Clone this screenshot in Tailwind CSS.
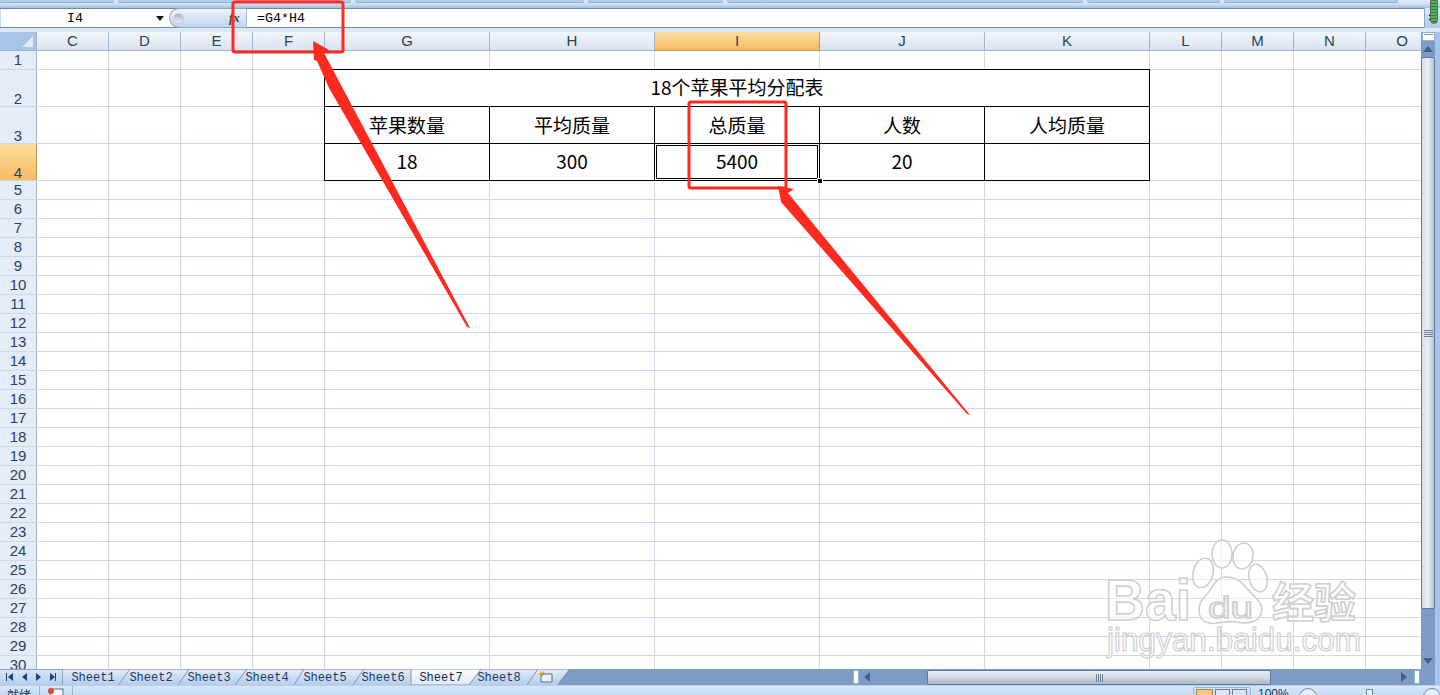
<!DOCTYPE html>
<html lang="zh">
<head>
<meta charset="utf-8">
<title>Excel</title>
<script src="https://cdn.jsdelivr.net/npm/@tailwindcss/browser@4"></script>
</head>
<body class="overflow-hidden">
<div class="relative w-[1440px] h-[695px] overflow-hidden flex flex-col bg-white font-['Liberation_Sans',sans-serif]">

  <!-- ribbon remnant -->
  <div class="h-[8px] shrink-0 bg-gradient-to-b from-[#dcecfb] via-[#cfe2f6] to-[#a6bedc] flex items-start gap-[4px]">
    <div class="w-[114px] h-[3px] rounded-b-[2px] bg-[#aecde9] border-b border-[#8fb2d6]"></div>
    <div class="w-[233px] h-[3px] rounded-b-[2px] bg-[#aecde9] border-b border-[#8fb2d6]"></div>
    <div class="w-[229px] h-[3px] rounded-b-[2px] bg-[#aecde9] border-b border-[#8fb2d6]"></div>
    <div class="w-[135px] h-[3px] rounded-b-[2px] bg-[#aecde9] border-b border-[#8fb2d6]"></div>
    <div class="w-[356px] h-[3px] rounded-b-[2px] bg-[#aecde9] border-b border-[#8fb2d6]"></div>
    <div class="w-[133px] h-[3px] rounded-b-[2px] bg-[#aecde9] border-b border-[#8fb2d6]"></div>
    <div class="w-[174px] h-[3px] rounded-b-[2px] bg-[#aecde9] border-b border-[#8fb2d6]"></div>
  </div>

  <!-- formula bar -->
  <div class="relative h-[20px] shrink-0 flex items-stretch bg-white border-y border-[#6f88a8]">
    <div class="w-[1px] bg-[#c9dcf2]"></div>
    <div class="w-[168px] relative flex items-center pt-px font-['Liberation_Mono',monospace] text-[13.33px] text-black">
      <span class="ml-[66px]">I4</span>
      <svg class="ml-[73px]" width="8" height="5" viewBox="0 0 8 5"><path d="M0 0h8L4 5z" fill="#111"/></svg>
    </div>
    <div class="w-[77px] -my-px rounded-l-full bg-gradient-to-b from-[#f1f6fc] via-[#d5e3f3] to-[#c2d5ec] border border-[#8aa5c6] border-r-0 flex items-center">
      <div class="ml-[3px] w-[11px] h-[11px] rounded-full bg-gradient-to-b from-[#aab4c0] to-[#eef2f6] border border-[#c8d2de]"></div>
      <span class="ml-[45px] font-['Liberation_Serif',serif] italic text-[13px] font-bold text-[#444]">fx</span>
    </div>
    <div class="w-[1px] bg-[#a9bdd6]"></div>
    <div class="flex-1 flex items-center pl-[10px] pt-px font-['Liberation_Mono',monospace] text-[13.33px] text-black">=G4*H4</div>
    <div class="w-[16px] -my-px bg-gradient-to-b from-[#dce8f6] to-[#b5cbe5] border-l border-[#8aa5c6] flex items-center justify-center">
      <svg width="9" height="10" viewBox="0 0 9 10"><path d="M1 2l3 2 3-2M1 6l3 2 3-2" fill="none" stroke="#111" stroke-width="1.2"/></svg>
    </div>
  </div>
  <div class="h-[4px] shrink-0 bg-[#dbe8f6]"></div>

  <!-- sheet + vertical scrollbar -->
  <div class="h-[637px] shrink-0 flex">
    <div class="relative flex-1 overflow-hidden">
      <!-- vertical gridlines -->
      <div class="absolute inset-0 flex">
        <div class="w-[37px] shrink-0"></div>
        <div class="w-[72px] shrink-0 border-r border-[#d0d7e5]"></div>
        <div class="w-[72px] shrink-0 border-r border-[#d0d7e5]"></div>
        <div class="w-[72px] shrink-0 border-r border-[#d0d7e5]"></div>
        <div class="w-[72px] shrink-0 border-r border-[#d0d7e5]"></div>
        <div class="w-[165px] shrink-0 border-r border-[#d0d7e5]"></div>
        <div class="w-[165px] shrink-0 border-r border-[#d0d7e5]"></div>
        <div class="w-[165px] shrink-0 border-r border-[#d0d7e5]"></div>
        <div class="w-[165px] shrink-0 border-r border-[#d0d7e5]"></div>
        <div class="w-[165px] shrink-0 border-r border-[#d0d7e5]"></div>
        <div class="w-[72px] shrink-0 border-r border-[#d0d7e5]"></div>
        <div class="w-[72px] shrink-0 border-r border-[#d0d7e5]"></div>
        <div class="w-[72px] shrink-0 border-r border-[#d0d7e5]"></div>
      </div>

      <div class="relative flex flex-col text-[#2b4160] text-[15px]">
        <!-- column headers -->
        <div class="flex h-[19px] shrink-0 text-[#2b4160]">
          <div class="w-[37px] shrink-0 bg-[#a9c4e9] border-r border-b border-[#9eb6ce] relative">
            <svg class="absolute right-[3px] bottom-[3px]" width="11" height="11" viewBox="0 0 11 11"><path d="M11 0v11H0z" fill="#e4ecf7"/></svg>
          </div>
          <div class="w-[72px] shrink-0 pt-px flex items-center justify-center bg-gradient-to-b from-[#f3f6fb] to-[#d9e3ef] border-r border-b border-[#9eb6ce]">C</div>
          <div class="w-[72px] shrink-0 pt-px flex items-center justify-center bg-gradient-to-b from-[#f3f6fb] to-[#d9e3ef] border-r border-b border-[#9eb6ce]">D</div>
          <div class="w-[72px] shrink-0 pt-px flex items-center justify-center bg-gradient-to-b from-[#f3f6fb] to-[#d9e3ef] border-r border-b border-[#9eb6ce]">E</div>
          <div class="w-[72px] shrink-0 pt-px flex items-center justify-center bg-gradient-to-b from-[#f3f6fb] to-[#d9e3ef] border-r border-b border-[#9eb6ce]">F</div>
          <div class="w-[165px] shrink-0 pt-px flex items-center justify-center bg-gradient-to-b from-[#f3f6fb] to-[#d9e3ef] border-r border-b border-[#9eb6ce]">G</div>
          <div class="w-[165px] shrink-0 pt-px flex items-center justify-center bg-gradient-to-b from-[#f3f6fb] to-[#d9e3ef] border-r border-b border-[#9eb6ce]">H</div>
          <div class="w-[165px] shrink-0 pt-px flex items-center justify-center bg-gradient-to-b from-[#fbdf9f] to-[#f6b95f] border-r border-b border-[#c29a4f]">I</div>
          <div class="w-[165px] shrink-0 pt-px flex items-center justify-center bg-gradient-to-b from-[#f3f6fb] to-[#d9e3ef] border-r border-b border-[#9eb6ce]">J</div>
          <div class="w-[165px] shrink-0 pt-px flex items-center justify-center bg-gradient-to-b from-[#f3f6fb] to-[#d9e3ef] border-r border-b border-[#9eb6ce]">K</div>
          <div class="w-[72px] shrink-0 pt-px flex items-center justify-center bg-gradient-to-b from-[#f3f6fb] to-[#d9e3ef] border-r border-b border-[#9eb6ce]">L</div>
          <div class="w-[72px] shrink-0 pt-px flex items-center justify-center bg-gradient-to-b from-[#f3f6fb] to-[#d9e3ef] border-r border-b border-[#9eb6ce]">M</div>
          <div class="w-[72px] shrink-0 pt-px flex items-center justify-center bg-gradient-to-b from-[#f3f6fb] to-[#d9e3ef] border-r border-b border-[#9eb6ce]">N</div>
          <div class="w-[72px] shrink-0 pt-px flex items-center justify-center bg-gradient-to-b from-[#f3f6fb] to-[#d9e3ef] border-b border-[#9eb6ce]">O</div>
        </div>

        <!-- rows -->
        <div class="flex h-[19px] shrink-0 border-b border-[#d0d7e5]"><div class="w-[37px] shrink-0 pt-px bg-[#e4ecf7] border-r border-[#9eb6ce] flex items-center justify-center">1</div></div>

        <div class="flex h-[37px] shrink-0 border-b border-[#d0d7e5]">
          <div class="w-[37px] shrink-0 bg-[#e4ecf7] border-r border-[#9eb6ce] flex items-end justify-center leading-[14px]">2</div>
          <div class="w-[287px] shrink-0"></div>
          <div class="w-[826px] h-[38px] -mt-px pb-[2px] shrink-0 bg-white border border-black flex items-center justify-center text-[19px] text-black font-['Noto_Sans_CJK_SC',sans-serif]">18个苹果平均分配表</div>
        </div>

        <div class="flex h-[37px] shrink-0 border-b border-[#d0d7e5]">
          <div class="w-[37px] shrink-0 bg-[#e4ecf7] border-r border-[#9eb6ce] flex items-end justify-center leading-[14px]">3</div>
          <div class="w-[287px] shrink-0"></div>
          <div class="flex text-[19px] text-black font-['Noto_Sans_CJK_SC',sans-serif]">
            <div class="w-[166px] h-[38px] -mt-px bg-white border border-black flex items-center justify-center">苹果数量</div>
            <div class="w-[166px] h-[38px] -mt-px -ml-px bg-white border border-black flex items-center justify-center">平均质量</div>
            <div class="w-[166px] h-[38px] -mt-px -ml-px bg-white border border-black flex items-center justify-center">总质量</div>
            <div class="w-[166px] h-[38px] -mt-px -ml-px bg-white border border-black flex items-center justify-center">人数</div>
            <div class="w-[166px] h-[38px] -mt-px -ml-px bg-white border border-black flex items-center justify-center">人均质量</div>
          </div>
        </div>

        <div class="flex h-[37px] shrink-0 border-b border-[#d0d7e5]">
          <div class="w-[37px] shrink-0 bg-gradient-to-b from-[#fbdf9f] to-[#f6b95f] border-r border-[#c29a4f] flex items-end justify-center leading-[14px]">4</div>
          <div class="w-[287px] shrink-0"></div>
          <div class="flex text-[19px] text-black font-['Noto_Sans_CJK_SC',sans-serif]">
            <div class="w-[166px] h-[38px] -mt-px pb-[2px] bg-white border border-black flex items-center justify-center">18</div>
            <div class="w-[166px] h-[38px] -mt-px -ml-px pb-[2px] bg-white border border-black flex items-center justify-center">300</div>
            <div class="relative w-[166px] h-[38px] -mt-px -ml-px pb-[2px] bg-white border border-black flex items-center justify-center">5400
              <div class="absolute inset-0 border border-white"></div>
              <div class="absolute inset-px border border-black"></div>
              <div class="absolute -right-[4px] -bottom-[4px] w-[6px] h-[6px] bg-black border border-white"></div>
            </div>
            <div class="w-[166px] h-[38px] -mt-px -ml-px pb-[2px] bg-white border border-black flex items-center justify-center">20</div>
            <div class="w-[166px] h-[38px] -mt-px -ml-px bg-white border border-black"></div>
          </div>
        </div>

        <div class="flex h-[19px] shrink-0 border-b border-[#d0d7e5]"><div class="w-[37px] shrink-0 pt-px bg-[#e4ecf7] border-r border-[#9eb6ce] flex items-center justify-center">5</div></div>
        <div class="flex h-[19px] shrink-0 border-b border-[#d0d7e5]"><div class="w-[37px] shrink-0 pt-px bg-[#e4ecf7] border-r border-[#9eb6ce] flex items-center justify-center">6</div></div>
        <div class="flex h-[19px] shrink-0 border-b border-[#d0d7e5]"><div class="w-[37px] shrink-0 pt-px bg-[#e4ecf7] border-r border-[#9eb6ce] flex items-center justify-center">7</div></div>
        <div class="flex h-[19px] shrink-0 border-b border-[#d0d7e5]"><div class="w-[37px] shrink-0 pt-px bg-[#e4ecf7] border-r border-[#9eb6ce] flex items-center justify-center">8</div></div>
        <div class="flex h-[19px] shrink-0 border-b border-[#d0d7e5]"><div class="w-[37px] shrink-0 pt-px bg-[#e4ecf7] border-r border-[#9eb6ce] flex items-center justify-center">9</div></div>
        <div class="flex h-[19px] shrink-0 border-b border-[#d0d7e5]"><div class="w-[37px] shrink-0 pt-px bg-[#e4ecf7] border-r border-[#9eb6ce] flex items-center justify-center">10</div></div>
        <div class="flex h-[19px] shrink-0 border-b border-[#d0d7e5]"><div class="w-[37px] shrink-0 pt-px bg-[#e4ecf7] border-r border-[#9eb6ce] flex items-center justify-center">11</div></div>
        <div class="flex h-[19px] shrink-0 border-b border-[#d0d7e5]"><div class="w-[37px] shrink-0 pt-px bg-[#e4ecf7] border-r border-[#9eb6ce] flex items-center justify-center">12</div></div>
        <div class="flex h-[19px] shrink-0 border-b border-[#d0d7e5]"><div class="w-[37px] shrink-0 pt-px bg-[#e4ecf7] border-r border-[#9eb6ce] flex items-center justify-center">13</div></div>
        <div class="flex h-[19px] shrink-0 border-b border-[#d0d7e5]"><div class="w-[37px] shrink-0 pt-px bg-[#e4ecf7] border-r border-[#9eb6ce] flex items-center justify-center">14</div></div>
        <div class="flex h-[19px] shrink-0 border-b border-[#d0d7e5]"><div class="w-[37px] shrink-0 pt-px bg-[#e4ecf7] border-r border-[#9eb6ce] flex items-center justify-center">15</div></div>
        <div class="flex h-[19px] shrink-0 border-b border-[#d0d7e5]"><div class="w-[37px] shrink-0 pt-px bg-[#e4ecf7] border-r border-[#9eb6ce] flex items-center justify-center">16</div></div>
        <div class="flex h-[19px] shrink-0 border-b border-[#d0d7e5]"><div class="w-[37px] shrink-0 pt-px bg-[#e4ecf7] border-r border-[#9eb6ce] flex items-center justify-center">17</div></div>
        <div class="flex h-[19px] shrink-0 border-b border-[#d0d7e5]"><div class="w-[37px] shrink-0 pt-px bg-[#e4ecf7] border-r border-[#9eb6ce] flex items-center justify-center">18</div></div>
        <div class="flex h-[19px] shrink-0 border-b border-[#d0d7e5]"><div class="w-[37px] shrink-0 pt-px bg-[#e4ecf7] border-r border-[#9eb6ce] flex items-center justify-center">19</div></div>
        <div class="flex h-[19px] shrink-0 border-b border-[#d0d7e5]"><div class="w-[37px] shrink-0 pt-px bg-[#e4ecf7] border-r border-[#9eb6ce] flex items-center justify-center">20</div></div>
        <div class="flex h-[19px] shrink-0 border-b border-[#d0d7e5]"><div class="w-[37px] shrink-0 pt-px bg-[#e4ecf7] border-r border-[#9eb6ce] flex items-center justify-center">21</div></div>
        <div class="flex h-[19px] shrink-0 border-b border-[#d0d7e5]"><div class="w-[37px] shrink-0 pt-px bg-[#e4ecf7] border-r border-[#9eb6ce] flex items-center justify-center">22</div></div>
        <div class="flex h-[19px] shrink-0 border-b border-[#d0d7e5]"><div class="w-[37px] shrink-0 pt-px bg-[#e4ecf7] border-r border-[#9eb6ce] flex items-center justify-center">23</div></div>
        <div class="flex h-[19px] shrink-0 border-b border-[#d0d7e5]"><div class="w-[37px] shrink-0 pt-px bg-[#e4ecf7] border-r border-[#9eb6ce] flex items-center justify-center">24</div></div>
        <div class="flex h-[19px] shrink-0 border-b border-[#d0d7e5]"><div class="w-[37px] shrink-0 pt-px bg-[#e4ecf7] border-r border-[#9eb6ce] flex items-center justify-center">25</div></div>
        <div class="flex h-[19px] shrink-0 border-b border-[#d0d7e5]"><div class="w-[37px] shrink-0 pt-px bg-[#e4ecf7] border-r border-[#9eb6ce] flex items-center justify-center">26</div></div>
        <div class="flex h-[19px] shrink-0 border-b border-[#d0d7e5]"><div class="w-[37px] shrink-0 pt-px bg-[#e4ecf7] border-r border-[#9eb6ce] flex items-center justify-center">27</div></div>
        <div class="flex h-[19px] shrink-0 border-b border-[#d0d7e5]"><div class="w-[37px] shrink-0 pt-px bg-[#e4ecf7] border-r border-[#9eb6ce] flex items-center justify-center">28</div></div>
        <div class="flex h-[19px] shrink-0 border-b border-[#d0d7e5]"><div class="w-[37px] shrink-0 pt-px bg-[#e4ecf7] border-r border-[#9eb6ce] flex items-center justify-center">29</div></div>
        <div class="flex h-[19px] shrink-0 border-b border-[#d0d7e5]"><div class="w-[37px] shrink-0 bg-[#e4ecf7] border-r border-[#9eb6ce] flex items-center justify-center">30</div></div>
      </div>
    </div>

    <!-- vertical scrollbar -->
    <div class="w-[14px] shrink-0 bg-[#7d9bc5] flex flex-col items-center">
      <div class="w-[13px] h-[9px] shrink-0 bg-white border border-[#8fb0d9] flex items-start justify-center pt-px"><div class="w-[9px] h-px bg-[#7d9bc5]"></div></div>
      <div class="h-[16px] shrink-0 flex items-center justify-center"><svg width="10" height="6" viewBox="0 0 10 6"><path d="M0 6L5 0l5 6z" fill="#4a5f86"/></svg></div>
      <div class="w-[14px] h-[552px] shrink-0 rounded-[2px] bg-gradient-to-r from-[#d7dfe9] via-[#e9edf2] to-[#b4c2d2] border border-[#5c7aa6] flex flex-col items-center justify-center gap-px">
        <div class="w-[9px] h-px bg-[#6f7f92]"></div><div class="w-[9px] h-px bg-[#6f7f92]"></div><div class="w-[9px] h-px bg-[#6f7f92]"></div><div class="w-[9px] h-px bg-[#6f7f92]"></div>
      </div>
      <div class="flex-1"></div>
      <div class="h-[17px] shrink-0 flex items-center justify-center"><svg width="10" height="6" viewBox="0 0 10 6"><path d="M0 0h10L5 6z" fill="#4a5f86"/></svg></div>
    </div>
    <div class="w-[5px] shrink-0 bg-[#a9c4ea]"></div>
  </div>

  <!-- sheet tabs and horizontal scrollbar -->
  <div class="h-[16px] shrink-0 flex bg-[#7d9bc5]">
    <div class="w-[63px] shrink-0 bg-gradient-to-b from-[#d6e4f5] to-[#b4cdea] border-r border-[#8aa5c6] border-t">
      <svg width="62" height="15" viewBox="0 0 62 15"><path d="M6 3v8h1V3zM13 3v8L8 7zM27 3v8l-5-4zM36 3v8l5-4zM50 3v8l5-4zM55 3v8h1V3z" fill="#1e3f7c"/></svg>
    </div>
    <div class="relative w-[506px] shrink-0 overflow-hidden">
      <svg class="absolute inset-0" width="506" height="16" viewBox="63 669 506 16">
        <defs>
          <linearGradient id="tabBg" x1="0" y1="0" x2="0" y2="1"><stop offset="0" stop-color="#e3edf9"/><stop offset="1" stop-color="#b5cdea"/></linearGradient>
          <linearGradient id="tabOn" x1="0" y1="0" x2="0" y2="1"><stop offset="0" stop-color="#ffffff"/><stop offset="1" stop-color="#dfe9f6"/></linearGradient>
        </defs>
        <path d="M63 669H569L557 685H63z" fill="url(#tabBg)"/>
        <path d="M63 669H569" stroke="#6f88a8"/>
        <path d="M118.5 685L130 669M178 685L189 669M235 685L247 669M294 685L304 669M353 685L364 669M527 685L538 669" stroke="#7e97b8"/>
        <path d="M411 669H481L469 685H411z" fill="url(#tabOn)" stroke="#7e97b8"/>
        <path d="M540 671l2 2 2-2v2l2 1-2 1 1 2-3-1-2 1v-2l-2-1 2-1z" fill="#e8a020"/>
        <path d="M543 674h9v8h-11v-5z" fill="#eef3fa" stroke="#5d6f85"/>
      </svg>
      <div class="relative flex h-full items-center pt-px font-['Liberation_Mono',monospace] text-[12px] text-[#1d3b6a]">
        <span class="w-[58px] ml-px text-center">Sheet1</span>
        <span class="w-[58px] text-center">Sheet2</span>
        <span class="w-[58px] text-center">Sheet3</span>
        <span class="w-[58px] text-center">Sheet4</span>
        <span class="w-[58px] text-center">Sheet5</span>
        <span class="w-[58px] text-center">Sheet6</span>
        <span class="w-[58px] text-center text-[#10294f]">Sheet7</span>
        <span class="w-[58px] text-center">Sheet8</span>
      </div>
    </div>
    <div class="flex-1 flex items-center">
      <div class="ml-[284px] w-[6px] h-[14px] bg-white border border-[#8fb0d9]"></div>
      <svg class="ml-[5px]" width="6" height="10" viewBox="0 0 6 10"><path d="M6 0v10L0 5z" fill="#4a5f86"/></svg>
      <div class="ml-[57px] w-[344px] h-[15px] mt-px rounded-[2px] bg-gradient-to-b from-[#e9edf2] via-[#d2dae4] to-[#aab9ca] border border-[#5c7aa6] flex items-center justify-center gap-px">
        <div class="w-px h-[8px] bg-[#6f7f92]"></div><div class="w-px h-[8px] bg-[#6f7f92]"></div><div class="w-px h-[8px] bg-[#6f7f92]"></div><div class="w-px h-[8px] bg-[#6f7f92]"></div>
      </div>
      <svg class="ml-[130px]" width="6" height="10" viewBox="0 0 6 10"><path d="M0 0v10l6-5z" fill="#4a5f86"/></svg>
      <div class="ml-[7px] w-[6px] h-[14px] bg-white border border-[#8fb0d9]"></div>
      <div class="flex-1"></div>
      <div class="w-[5px] h-full bg-[#a9c4ea]"></div>
    </div>
  </div>

  <!-- status bar (cut off by the window) -->
  <div class="flex-1 relative overflow-hidden bg-gradient-to-b from-[#d7e7f9] to-[#c5daf3] border-t border-[#b8cfe9] flex items-start text-[12px] text-[#1d3b6a]">
    <span class="w-[40px] h-[30px] shrink-0 border-r border-[#9db6d4] pl-[7px] pt-[1px] font-['Noto_Sans_CJK_SC',sans-serif] leading-[16px]">就绪</span>
    <div class="w-[33px] h-[30px] shrink-0 border-r border-[#9db6d4] pl-[8px] pt-[2px]">
      <svg width="16" height="10" viewBox="0 0 16 10"><rect x="2" y="1" width="13" height="12" fill="#f4f7fb" stroke="#5d6f85"/><circle cx="3" cy="3" r="3" fill="#e0492c"/></svg>
    </div>
    <div class="ml-[1120px] w-[58px] h-[20px] mt-[1px] shrink-0 border border-[#9db6d4] rounded-[2px] flex gap-[2px] pl-[2px]">
      <div class="w-[17px] h-[16px] bg-[#f6c77c] border border-[#a88a50] mt-[1px]"></div>
      <div class="w-[15px] h-[16px] bg-[#dbe6f3] border border-[#6f7f92] mt-[1px]"></div>
      <div class="w-[15px] h-[16px] bg-[#dbe6f3] border border-[#6f7f92] mt-[1px]"></div>
    </div>
    <span class="ml-[7px] w-[36px] shrink-0 leading-[16px]">100%</span>
    <div class="ml-[5px] w-[18px] h-[18px] mt-[2px] shrink-0 rounded-full border border-[#6f88a8] bg-[#e6eef8]"></div>
    <div class="ml-[49px] w-[7px] h-[14px] mt-[3px] shrink-0 border border-[#6f88a8] bg-[#e6eef8]"></div>
    <div class="ml-[50px] w-[18px] h-[18px] mt-[2px] shrink-0 rounded-full border border-[#6f88a8] bg-[#e6eef8]"></div>
  </div>

  <!-- green widget at the top right -->
  <div class="absolute right-[2px] top-0 w-[8px] h-[24px] rounded-b-[4px] border border-[#5a6a5a] bg-[repeating-linear-gradient(to_bottom,#4fb35a_0px,#4fb35a_2px,#2f7f3a_2px,#2f7f3a_3px)]"></div>

  <!-- annotations and watermark -->
  <svg class="absolute inset-0 pointer-events-none" width="1440" height="695" viewBox="0 0 1440 695">
    <g fill="#ffffff" fill-opacity="0.55" stroke="#cfcfcf" stroke-width="1.6">
      <ellipse cx="1203" cy="573" rx="10" ry="15" transform="rotate(15 1203 573)"/>
      <ellipse cx="1222" cy="554" rx="10" ry="14"/>
      <ellipse cx="1243" cy="556" rx="10" ry="13" transform="rotate(10 1243 556)"/>
      <ellipse cx="1258" cy="578" rx="9" ry="14" transform="rotate(-15 1258 578)"/>
      <path d="M1226 577c-10 0-13 10-18 16-6 7-10 11-9 19 1 9 9 13 18 11 6-1 14-2 20-1 9 2 21 1 24-8 3-9-3-14-9-20-7-7-12-17-26-17z"/>
      <text x="1105" y="620" font-family="Liberation Sans, sans-serif" font-size="58" font-weight="700" textLength="86" lengthAdjust="spacingAndGlyphs">Bai</text>
      <text x="1208" y="618" font-family="Liberation Sans, sans-serif" font-size="30" textLength="45" lengthAdjust="spacingAndGlyphs">du</text>
      <text x="1272" y="618" font-family="Noto Sans CJK SC, sans-serif" font-size="42" font-weight="700">经验</text>
      <text x="1107" y="651" font-family="Liberation Sans, sans-serif" font-size="33" stroke-width="1.2" textLength="254" lengthAdjust="spacingAndGlyphs">jingyan.baidu.com</text>
    </g>
    <g fill="none" stroke="#ff2a1f" stroke-width="3" stroke-linejoin="round">
      <rect x="233" y="2" width="110" height="50" rx="2"/>
      <rect x="689" y="102" width="97" height="86" rx="2"/>
    </g>
    <g fill="#ff2a1f">
      <path d="M313 41L329 50L324 53L470 328L467 327L329 88L317 61L314 60z"/>
      <path d="M778 186L794 189L788 193L970 415L967 414L795 218L781 202z"/>
    </g>
  </svg>
</div>
</body>
</html>
